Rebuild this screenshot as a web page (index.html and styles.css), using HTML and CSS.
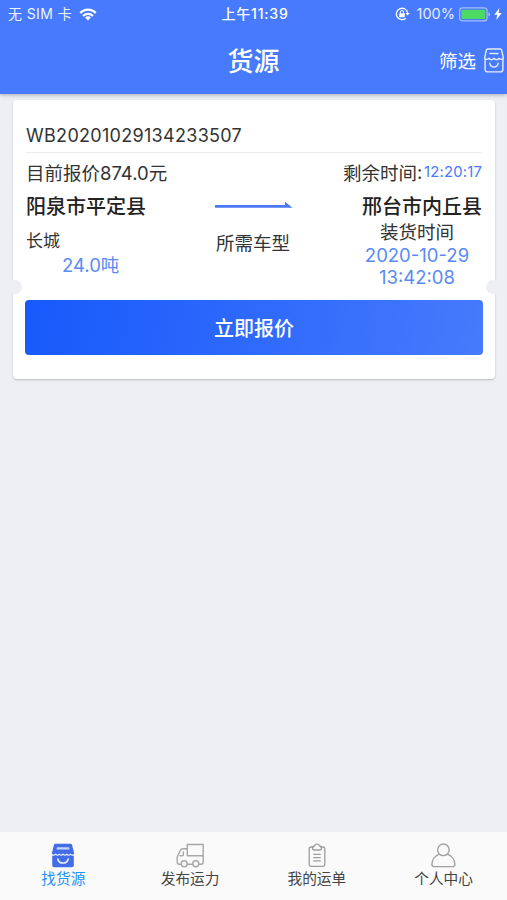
FILE: index.html
```html
<!DOCTYPE html>
<html lang="zh-CN">
<head>
<meta charset="utf-8">
<title>货源</title>
<link rel="stylesheet" href="styles.css">
</head>
<body>
<div class="app">
  <header class="header">
    <div class="status">
      <div class="status-left">
        <span>无 SIM 卡</span>
        <svg class="wifi" width="18" height="13" viewBox="0 0 18 13"><g fill="none" stroke="#fff" stroke-width="2.1"><path d="M1.2 4.9a11 11 0 0 1 15.6 0"/><path d="M4 7.9a7.1 7.1 0 0 1 10 0"/></g><path d="M9 12.5 6.1 9.6a4.1 4.1 0 0 1 5.8 0z" fill="#fff"/></svg>
      </div>
      <span class="clock">上午11:39</span>
      <div class="status-right">
        <svg width="15" height="14" viewBox="0 0 15 14"><path d="M10.9 11.2A5.7 5.7 0 1 1 12.7 6" fill="none" stroke="#fff" stroke-width="1.3"/><path d="M10.4 5.9h4.4l-2.2 2.7z" fill="#fff"/><rect x="4.2" y="6.2" width="5.6" height="4.1" rx=".6" fill="#fff"/><path d="M5.4 6.4V5.1a1.6 1.6 0 0 1 3.2 0v1.3" fill="none" stroke="#fff"/></svg>
        <span class="percent">100%</span>
        <svg width="32" height="15" viewBox="0 0 32 15"><rect x=".6" y=".9" width="27.4" height="13" rx="3" fill="none" stroke="#a5bdfb" stroke-width="1.2"/><rect x="2.4" y="2.7" width="23.8" height="9.4" rx="1.3" fill="#4cd964"/><path d="M29.4 5.3q1.7.5 1.7 2.1t-1.7 2.1z" fill="#a5bdfb"/></svg>
        <svg class="bolt" width="8" height="12" viewBox="0 0 8 12"><path d="M5.4 0 .3 6.7h3L2.3 12l5.4-7.1H4.6z" fill="#fff"/></svg>
      </div>
    </div>
    <div class="titlebar">
      <h1 class="title">货源</h1>
      <div class="filter">
        <span>筛选</span>
        <svg width="20" height="25" viewBox="0 0 20 25" fill="none" stroke="#e4ebff" stroke-width="1.4" stroke-linejoin="round" stroke-linecap="round"><path d="M3.7 1h12.6q1 0 1.3 1l1.7 7.6q0 1.8-1.8 1.8-1.3 0-2.5-1.2-1.2 1.5-2.5 1.5T10 10.2q-1.2 1.5-2.5 1.5T5 10.2q-1.2 1.2-2.5 1.2-1.8 0-1.8-1.8L2.4 2q.3-1 1.3-1z"/><path d="M1.1 11.5v10q0 2.4 2.4 2.4h13q2.4 0 2.4-2.4v-10M6 5.5h8M5.8 15.2c.8 5.2 7.6 5.2 8.4 0"/></svg>
      </div>
    </div>
  </header>
  <main class="content">
    <article class="card">
      <div class="order-no">WB20201029134233507</div>
      <div class="row quote">
        <span class="price">目前报价<span class="amount">874.0</span>元</span>
        <span class="remain">剩余时间<span class="colon">:</span><span class="countdown">12:20:17</span></span>
      </div>
      <div class="row route">
        <span>阳泉市平定县</span>
        <svg class="arrow" width="78" height="8" viewBox="0 0 78 8"><path d="M0 4h70V.8L77.5 6.8H0z" fill="#4a78f6"/></svg>
        <span>邢台市内丘县</span>
      </div>
      <div class="details">
        <div class="cargo"><span class="goods">长城</span><span class="weight">24.0吨</span></div>
        <div class="vehicle">所需车型</div>
        <div class="loading"><span>装货时间</span><span class="date">2020-10-29</span><span class="date">13:42:08</span></div>
      </div>
      <button class="bid">立即报价</button>
    </article>
  </main>
  <nav class="tabs">
    <a class="tab active">
      <svg width="24" height="25" viewBox="0 0 24 25"><path d="M4.3.8h15.4q1 0 1.3 1l2.2 8.8q-1.7 2.2-3.8 0-1.8 2.2-3.7 0-1.8 2.2-3.7 0-1.8 2.2-3.7 0-1.8 2.2-3.7 0-2.1 2.2-3.8 0L3 1.8q.3-1 1.3-1z" fill="#426ce8"/><path d="M1.2 12.4q1.7.8 3.4-.5 1.8 1.5 3.7 0 1.8 1.5 3.7 0 1.8 1.5 3.7 0 1.8 1.5 3.7 0 1.7 1.3 3.4.5v9.8q0 2.1-2.1 2.1H3.3q-2.1 0-2.1-2.1z" fill="#426ce8"/><path d="M6 4.2h12l.5 2.4h-13z" fill="#c9d6fb"/><path d="M6.8 16c1.2 5.4 9.2 5.4 10.4 0" fill="none" stroke="#e8eeff" stroke-width="1.6" stroke-linecap="round"/></svg>
      <span>找货源</span>
    </a>
    <a class="tab">
      <svg width="28" height="25" viewBox="0 0 28 25" fill="none" stroke="#a6a6a6" stroke-width="1.4" stroke-linejoin="round" stroke-linecap="round"><path d="M11.3 1.5h15.9v11.2H11.3zM11.3 5.8H7.2q-2 0-2.8 1.6L1.2 14v5q0 2.2 2.2 2.2h1.4M11.5 21.2h5.2M22.8 21.2h2.2q2.2 0 2.2-2.2v-6.3M4 12.8h2.1q1.3 0 1.3-1.3V8.9"/><circle cx="8.2" cy="20.7" r="3"/><circle cx="19.8" cy="20.7" r="3"/></svg>
      <span>发布运力</span>
    </a>
    <a class="tab">
      <svg width="18" height="25" viewBox="0 0 18 25" fill="none" stroke="#9d9d9d" stroke-width="1.3" stroke-linejoin="round" stroke-linecap="round"><path d="M5 4H3Q1.2 4 1.2 5.8v15.8q0 1.8 1.8 1.8h12q1.8 0 1.8-1.8V5.8Q16.8 4 15 4h-2"/><path d="M6.5 3Q7 1.1 9 1.1T11.5 3q2 .2 2 2.3 0 1.7-1.6 1.7H6.1Q4.5 7 4.5 5.3q0-2.1 2-2.3zM5.7 11.3h6.6M5.7 14.6h6.6M5.7 17.9h6.6"/></svg>
      <span>我的运单</span>
    </a>
    <a class="tab">
      <svg width="25" height="25" viewBox="0 0 25 25" fill="none" stroke="#a1a1a1" stroke-width="1.4" stroke-linejoin="round"><circle cx="12.4" cy="6.8" r="5.8"/><path d="M8.3 11.1C4 12.8.9 17 .9 21.5q0 2.1 2.1 2.1h18.8q2.1 0 2.1-2.1c0-4.5-3.1-8.7-7.4-10.4"/></svg>
      <span>个人中心</span>
    </a>
  </nav>
</div>
</body>
</html>
```
FILE: styles.css
```css
* { box-sizing: border-box; }
body {
  margin: 0;
  background: #edeff2;
  color: #333;
  font-family: Inter, "Noto Sans CJK SC", sans-serif;
}
svg { display: block; flex: none; }
.app { height: 900px; display: flex; flex-direction: column; overflow: hidden; }
.header {
  height: 94px;
  background: #477afc;
  color: #fff;
  box-shadow: 0 1px 4px rgba(0, 0, 0, .28);
}
.status {
  height: 28px;
  padding: 0 5px 0 8px;
  display: grid;
  grid-template-columns: 1fr auto 1fr;
  align-items: center;
  font-size: 14px;
  line-height: 28px;
  white-space: nowrap;
}
.status-left, .status-right { display: flex; align-items: center; }
.status-left { gap: 7px; color: #edf2ff; letter-spacing: .4px; }
.clock { font-size: 14px; font-weight: 500; letter-spacing: .8px; }
.status-right { justify-content: flex-end; }
.percent { margin: 0 4px 0 7px; font-size: 14.5px; color: #e5ecff; }
.bolt { margin-left: 3px; }
.titlebar {
  height: 64px;
  display: grid;
  grid-template-columns: 1fr auto 1fr;
  align-items: center;
}
.title { grid-column: 2; margin: 0; padding-top: 3px; font-size: 26px; font-weight: 500; line-height: 36px; }
.filter {
  display: flex;
  justify-content: flex-end;
  align-items: center;
  gap: 8px;
  padding-right: 3px;
  font-size: 18.5px;
}
.content { flex: 1; padding: 6px 12px 0 13px; }
.card {
  position: relative;
  height: 279px;
  padding: 17px 13px 0;
  background: #fff;
  border-radius: 4px;
  box-shadow: 0 1px 2px rgba(0, 0, 0, .22);
}
.card::before, .card::after {
  content: "";
  position: absolute;
  top: 180px;
  width: 14px;
  height: 14px;
  border-radius: 50%;
  background: #edeff2;
}
.card::before { left: -5px; }
.card::after { right: -5px; }
.order-no {
  height: 36px;
  border-bottom: 1px solid #ededed;
  font-size: 18px;
  line-height: 37px;
  letter-spacing: .3px;
}
.row { display: flex; justify-content: space-between; align-items: center; white-space: nowrap; }
.quote { height: 37px; font-size: 18.5px; }
.remain { display: flex; align-items: center; }
.colon { width: 6px; margin-right: 1px; }
.countdown { color: #477afc; font-size: 14.8px; letter-spacing: .25px; margin-right: -.25px; }
.route { height: 30px; font-size: 20px; font-weight: 500; color: #222; }
.details {
  height: 80px;
  display: grid;
  grid-template-columns: 1fr 76px 1fr;
  padding-top: 1px;
  font-size: 18.5px;
  line-height: 22px;
}
.cargo { display: flex; flex-direction: column; padding-top: 8px; }
.goods { font-size: 17px; line-height: 24px; }
.weight { margin-left: 36px; line-height: 25px; color: #5a8af8; }
.vehicle { padding-top: 11px; white-space: nowrap; }
.loading { display: flex; flex-direction: column; align-items: center; margin-left: 60px; white-space: nowrap; }
.date { position: relative; top: 1px; color: #5a8af8; }
.bid {
  display: block;
  width: 458px;
  height: 55px;
  margin: 0 0 0 -1px;
  padding: 3px 0 0;
  border: 0;
  border-radius: 4px;
  background: linear-gradient(100deg, #1759fb, #477afc);
  color: #fff;
  font: 500 20px/52px Inter, "Noto Sans CJK SC", sans-serif;
}
.tabs {
  height: 68px;
  display: grid;
  grid-template-columns: repeat(4, 1fr);
  background: #fafafa;
}
.tab {
  display: flex;
  flex-direction: column;
  align-items: center;
  padding-top: 11px;
  font-size: 14.7px;
  line-height: 23px;
  color: #444;
}
.active { color: #2492f8; }
```
